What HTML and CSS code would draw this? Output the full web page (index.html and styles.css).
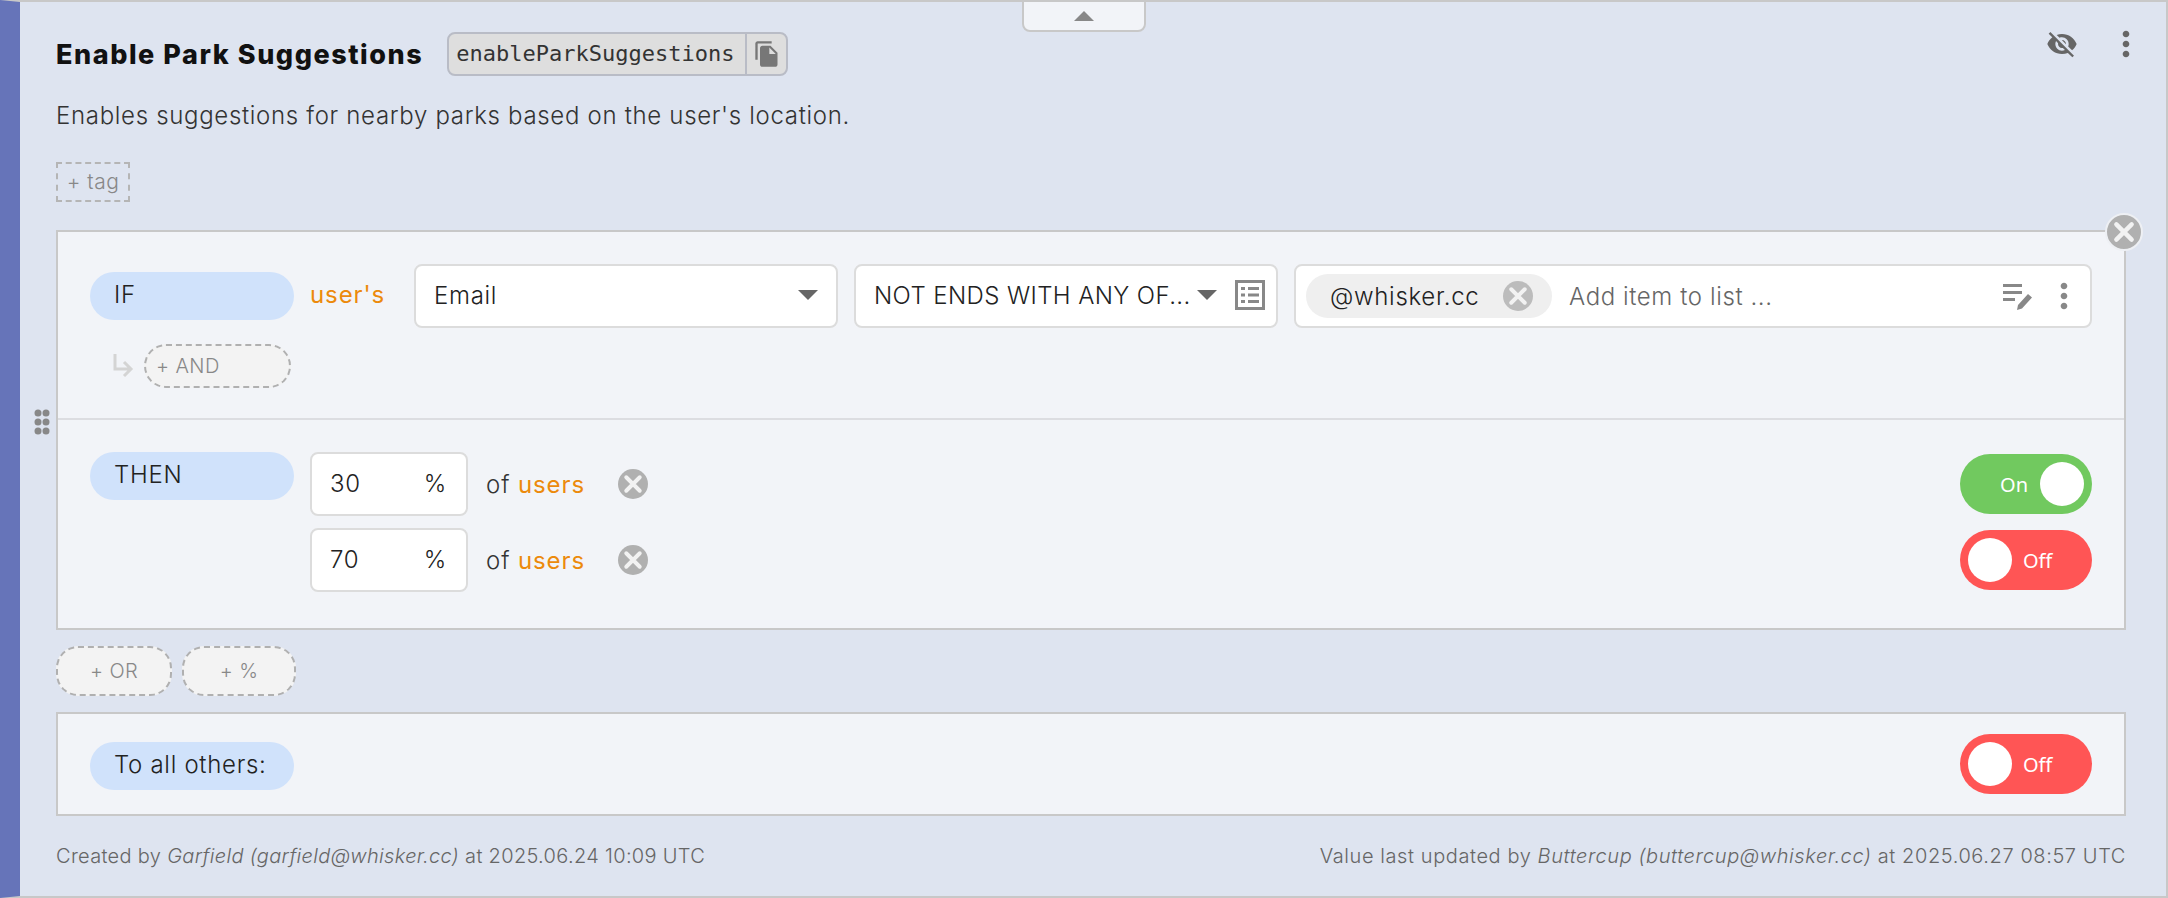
FILE: index.html
```html
<!DOCTYPE html>
<html lang="en">
<head>
<meta charset="utf-8">
<title>Enable Park Suggestions</title>
<link rel="stylesheet" href="styles.css">
</head>
<body>
<main class="card">
  <button class="collapse-tab" aria-label="Collapse"><span class="tab-arrow"></span></button>
  <header class="head">
    <h1 class="title">Enable Park Suggestions</h1>
    <div class="key-chip">
      <code class="key-text">enableParkSuggestions</code>
      <span class="key-copy"><svg class="ic-copy" viewBox="0 0 24 24"><path d="M16 1H4c-1.1 0-2 .9-2 2v14h2V3h12V1zm-1 4l6 6v10c0 1.1-.9 2-2 2H7.99C6.89 23 6 22.1 6 21l.01-14c0-1.1.89-2 1.99-2h7zm-1 7h5.5L14 6.5V12z"/></svg></span>
    </div>
    <div class="head-actions">
      <svg class="ic-eye" viewBox="0 0 24 24"><path d="M12 7c2.76 0 5 2.24 5 5 0 .65-.13 1.26-.36 1.83l2.92 2.92c1.51-1.26 2.7-2.89 3.43-4.75-1.73-4.39-6-7.5-11-7.5-1.4 0-2.74.25-3.98.7l2.16 2.16C10.74 7.13 11.35 7 12 7zM2 4.27l2.28 2.28.46.46C3.08 8.3 1.78 10.02 1 12c1.73 4.39 6 7.5 11 7.5 1.55 0 3.03-.3 4.38-.84l.42.42L19.73 22 21 20.73 3.27 3 2 4.27zM7.53 9.8l1.55 1.55c-.05.21-.08.43-.08.65 0 1.66 1.34 3 3 3 .22 0 .44-.03.65-.08l1.55 1.55c-.67.33-1.41.53-2.2.53-2.76 0-5-2.24-5-5 0-.79.2-1.53.53-2.2zm4.31-.78l3.15 3.15.02-.16c0-1.66-1.34-3-3-3l-.17.01z"/></svg>
      <svg class="ic-more" viewBox="0 0 24 24"><path d="M12 8c1.1 0 2-.9 2-2s-.9-2-2-2-2 .9-2 2 .9 2 2 2zm0 2c-1.1 0-2 .9-2 2s.9 2 2 2 2-.9 2-2-.9-2-2-2zm0 6c-1.1 0-2 .9-2 2s.9 2 2 2 2-.9 2-2-.9-2-2-2z"/></svg>
    </div>
  </header>
  <p class="desc">Enables suggestions for nearby parks based on the user's location.</p>
  <div class="tag-add">+ tag</div>

  <section class="rule">
    <svg class="drag" viewBox="0 0 16 26"><circle cx="4" cy="4" r="3.5"/><circle cx="12" cy="4" r="3.5"/><circle cx="4" cy="13" r="3.5"/><circle cx="12" cy="13" r="3.5"/><circle cx="4" cy="22" r="3.5"/><circle cx="12" cy="22" r="3.5"/></svg>
    <span class="x-btn x-rule"><svg viewBox="0 0 20 20"><path d="M5.500 5.500l9 9M14.500 5.500l-9 9"/></svg></span>
    <div class="if-part">
      <div class="row">
        <div class="pill">IF</div>
        <span class="orange users-label">user's</span>
        <div class="box select-attr"><span class="box-text">Email</span><span class="caret"></span></div>
        <div class="box select-op"><span class="box-text op-text">NOT ENDS WITH ANY OF...</span><span class="caret caret-op"></span>
          <svg class="ic-list" viewBox="0 0 30 30"><path fill-rule="evenodd" d="M0 0h30v30H0zM3 3v24h24V3zM6 7h4v3H6zm7 0h11v3H13zM6 13.500h4v3H6zm7 0h11v3H13zM6 20h4v3H6zm7 0h11v3H13z"/></svg>
        </div>
        <div class="box value-box">
          <span class="chip">@whisker.cc<span class="x-btn x-chip"><svg viewBox="0 0 20 20"><path d="M5.500 5.500l9 9M14.500 5.500l-9 9"/></svg></span></span>
          <span class="placeholder">Add item to list ...</span>
          <svg class="ic-edit" viewBox="0 0 32 32"><path d="M1 1h19v3H1zM1 8h19v3H1zM1 15h12v3H1zM15 27l1-5 10-11 4 3.500-10 11z"/></svg>
          <svg class="ic-more ic-more-val" viewBox="0 0 24 24"><path d="M12 8c1.100 0 2-.9 2-2s-.9-2-2-2-2 .9-2 2 .9 2 2 2zm0 2c-1.100 0-2 .9-2 2s.9 2 2 2 2-.9 2-2-.9-2-2-2zm0 6c-1.100 0-2 .9-2 2s.9 2 2 2 2-.9 2-2-.9-2-2-2z"/></svg>
        </div>
      </div>
      <div class="and-row">
        <svg class="ic-arrow" viewBox="0 0 22 26"><path d="M3 1v15h15M12 9l7 7-7 7"/></svg>
        <div class="dash dash-and">+ AND</div>
      </div>
    </div>
    <div class="then-part">
      <div class="pill">THEN</div>
      <div class="serves">
        <div class="serve">
          <div class="box pct"><span>30</span><span>%</span></div>
          <span class="of">of <span class="orange">users</span></span>
          <span class="x-btn x-serve"><svg viewBox="0 0 20 20"><path d="M5.500 5.500l9 9M14.500 5.500l-9 9"/></svg></span>
          <div class="toggle on"><span class="toggle-label">On</span><span class="knob"></span></div>
        </div>
        <div class="serve">
          <div class="box pct"><span>70</span><span>%</span></div>
          <span class="of">of <span class="orange">users</span></span>
          <span class="x-btn x-serve"><svg viewBox="0 0 20 20"><path d="M5.500 5.500l9 9M14.500 5.500l-9 9"/></svg></span>
          <div class="toggle off"><span class="knob"></span><span class="toggle-label">Off</span></div>
        </div>
      </div>
    </div>
  </section>

  <div class="add-row">
    <div class="dash dash-or">+ OR</div>
    <div class="dash dash-pct">+ %</div>
  </div>

  <section class="others">
    <div class="pill">To all others:</div>
    <div class="toggle off"><span class="knob"></span><span class="toggle-label">Off</span></div>
  </section>

  <footer class="foot">
    <span class="foot-left">Created by <em>Garfield (garfield@whisker.cc)</em> at 2025.06.24 10:09 UTC</span>
    <span class="foot-right">Value last updated by <em>Buttercup (buttercup@whisker.cc)</em> at 2025.06.27 08:57 UTC</span>
  </footer>
</main>
</body>
</html>
```
FILE: styles.css
```css
* { box-sizing: border-box; }
html, body { margin: 0; padding: 0; }
body { font-family: Inter, "Liberation Sans", sans-serif; color: #222; font-weight: 300; }

.card {
  position: relative;
  height: 898px;
  background: #dee4f0;
  border-top: 2px solid #c8c8c8;
  border-bottom: 2px solid #c8c8c8;
  border-right: 2px solid #c8c8c8;
  border-left: 20px solid #6674b9;
  padding: 0 40px 0 36px;
  overflow: hidden;
}

.collapse-tab {
  position: absolute;
  top: -2px;
  left: 1002px;
  width: 124px;
  height: 32px;
  padding: 0;
  background: #f2f4f8;
  border: 2px solid #c8c8c8;
  border-radius: 0 0 8px 8px;
  display: flex;
  align-items: center;
  justify-content: center;
}
.tab-arrow {
  width: 0;
  height: 0;
  border-left: 10px solid transparent;
  border-right: 10px solid transparent;
  border-bottom: 10px solid #888;
}

.head { display: flex; align-items: center; height: 44px; margin-top: 30px; }
.title { margin: 0; font-size: 27px; font-weight: 800; color: #111; letter-spacing: 1.55px; white-space: nowrap; }
.key-chip {
  display: flex;
  align-items: stretch;
  height: 44px;
  margin-left: 24px;
  background: #dedede;
  border: 2px solid #b9bcc6;
  border-radius: 8px;
}
.key-text {
  font-family: "DejaVu Sans Mono", "Liberation Mono", monospace;
  font-size: 22px;
  font-weight: 400;
  line-height: 40px;
  padding: 0 11px 0 7px;
  color: #333;
}
.key-copy { display: flex; align-items: center; justify-content: center; width: 41px; border-left: 2px solid #b9bcc6; }
.ic-copy { width: 28px; height: 28px; fill: #777; }
.head-actions { margin-left: auto; display: flex; align-items: center; gap: 28px; margin-right: -20px; margin-bottom: 20px; }
.ic-eye { width: 32px; height: 32px; fill: #666; }
.ic-more { width: 40px; height: 40px; fill: #666; }

.desc { margin: 0; padding-top: 26px; font-size: 24px; letter-spacing: 0.68px; line-height: 28px; color: #333; white-space: nowrap; }

.tag-add {
  width: 74px;
  height: 40px;
  margin-top: 32px;
  border: 2px dashed #b5b5b5;
  font-size: 21px;
  letter-spacing: 0.5px;
  line-height: 36px;
  text-align: center;
  color: #888;
}

.rule {
  position: relative;
  height: 400px;
  margin-top: 28px;
  background: #f2f4f8;
  border: 2px solid #c8c8c8;
}
.drag { position: absolute; left: -24px; top: 177px; width: 16px; height: 26px; fill: #888; }
.x-btn { display: inline-flex; align-items: center; justify-content: center; border-radius: 50%; background: #b0b0b0; flex: none; }
.x-btn svg { width: 100%; height: 100%; fill: none; stroke: #f2f2f2; stroke-width: 2.6; stroke-linecap: round; }
.x-rule { position: absolute; right: -19px; top: -19px; width: 38px; height: 38px; border: 2px solid #eef0f4; }

.if-part { height: 188px; padding: 32px 32px 0 32px; border-bottom: 2px solid #dcdde1; }
.row { display: flex; align-items: flex-start; }
.pill {
  flex: none;
  width: 204px;
  height: 48px;
  padding-left: 24px;
  background: #d0e2fb;
  border-radius: 24px;
  font-size: 24px;
  letter-spacing: 0.7px;
  line-height: 46px;
  color: #222;
}
.row > .pill { margin-top: 8px; }
.orange { color: #ec8a0c; font-weight: 400; }
.users-label { width: 104px; margin-left: 16px; font-size: 24px; letter-spacing: 0.9px; line-height: 62px; white-space: nowrap; }
.box {
  display: flex;
  align-items: center;
  height: 64px;
  padding-bottom: 2px;
  background: #fff;
  border: 2px solid #dcdcdc;
  border-radius: 8px;
  font-size: 24px;
  letter-spacing: 0.7px;
  color: #222;
}
.select-attr { width: 424px; padding-left: 18px; padding-right: 18px; justify-content: space-between; }
.select-op { width: 424px; margin-left: 16px; padding-left: 18px; padding-right: 11px; }
.box-text { white-space: nowrap; }
.op-text { letter-spacing: 0.4px; }
.caret { width: 0; height: 0; border-left: 10px solid transparent; border-right: 10px solid transparent; border-top: 10px solid #666; }
.caret-op { margin-left: auto; margin-right: 18px; }
.ic-list { width: 30px; height: 30px; fill: #888; flex: none; }
.value-box { flex: 1; margin-left: 16px; padding: 0 6px 0 10px; }
.chip {
  display: flex;
  align-items: center;
  justify-content: space-between;
  width: 246px;
  height: 44px;
  padding: 0 19px 0 24px;
  background: #efefef;
  border-radius: 22px;
  white-space: nowrap;
}
.x-chip { width: 30px; height: 30px; background: #bcbcbc; }
.placeholder { margin-left: 17px; color: #666; letter-spacing: 0.6px; }
.ic-edit { width: 32px; height: 32px; margin-left: auto; margin-top: 6px; fill: #888; }
.ic-more-val { margin-left: 10px; fill: #888; }

.and-row { display: flex; align-items: center; margin-top: 16px; margin-left: 22px; gap: 10px; }
.ic-arrow { width: 22px; height: 26px; fill: none; stroke: #d4d4d4; stroke-width: 3; }
.dash {
  border: 2px dashed #b0b0b0;
  background: #f3f3f3;
  color: #888;
  font-size: 20px;
  letter-spacing: 0.4px;
  border-radius: 22px;
}
.dash-and { width: 147px; height: 44px; line-height: 40px; padding-left: 10px; }

.then-part { display: flex; align-items: flex-start; padding: 32px 32px 0 32px; }
.serves { flex: 1; margin-left: 16px; display: flex; flex-direction: column; gap: 12px; }
.serve { display: flex; align-items: center; }
.pct { width: 158px; padding-left: 18px; padding-right: 19px; justify-content: space-between; }
.of { width: 100px; margin-left: 18px; font-size: 24px; letter-spacing: 0.9px; color: #333; white-space: nowrap; }
.x-serve { width: 30px; height: 30px; margin-left: 32px; }

.toggle {
  display: flex;
  align-items: center;
  width: 132px;
  height: 60px;
  margin-left: auto;
  padding: 0 8px;
  border-radius: 30px;
  color: #fff;
  font-family: "Noto Sans", sans-serif;
  font-size: 20px;
  font-weight: 400;
}
.toggle.on { background: #71c95f; justify-content: flex-end; gap: 12px; }
.toggle.off { background: #ff5555; gap: 11px; }
.knob { width: 44px; height: 44px; border-radius: 50%; background: #fff; flex: none; }

.add-row { display: flex; gap: 10px; margin-top: 16px; }
.dash-or, .dash-pct { height: 50px; line-height: 46px; text-align: center; }
.dash-or { width: 116px; }
.dash-pct { width: 114px; }

.others {
  display: flex;
  align-items: center;
  height: 104px;
  margin-top: 16px;
  padding: 0 32px 0 32px;
  background: #f2f4f8;
  border: 2px solid #c8c8c8;
}
.others .pill { margin-top: 4px; }

.foot { display: flex; justify-content: space-between; margin-top: 28px; font-size: 20px; line-height: 24px; color: #666; }
.foot-left { letter-spacing: 0.32px; }
.foot-right { letter-spacing: 0.59px; }
```
